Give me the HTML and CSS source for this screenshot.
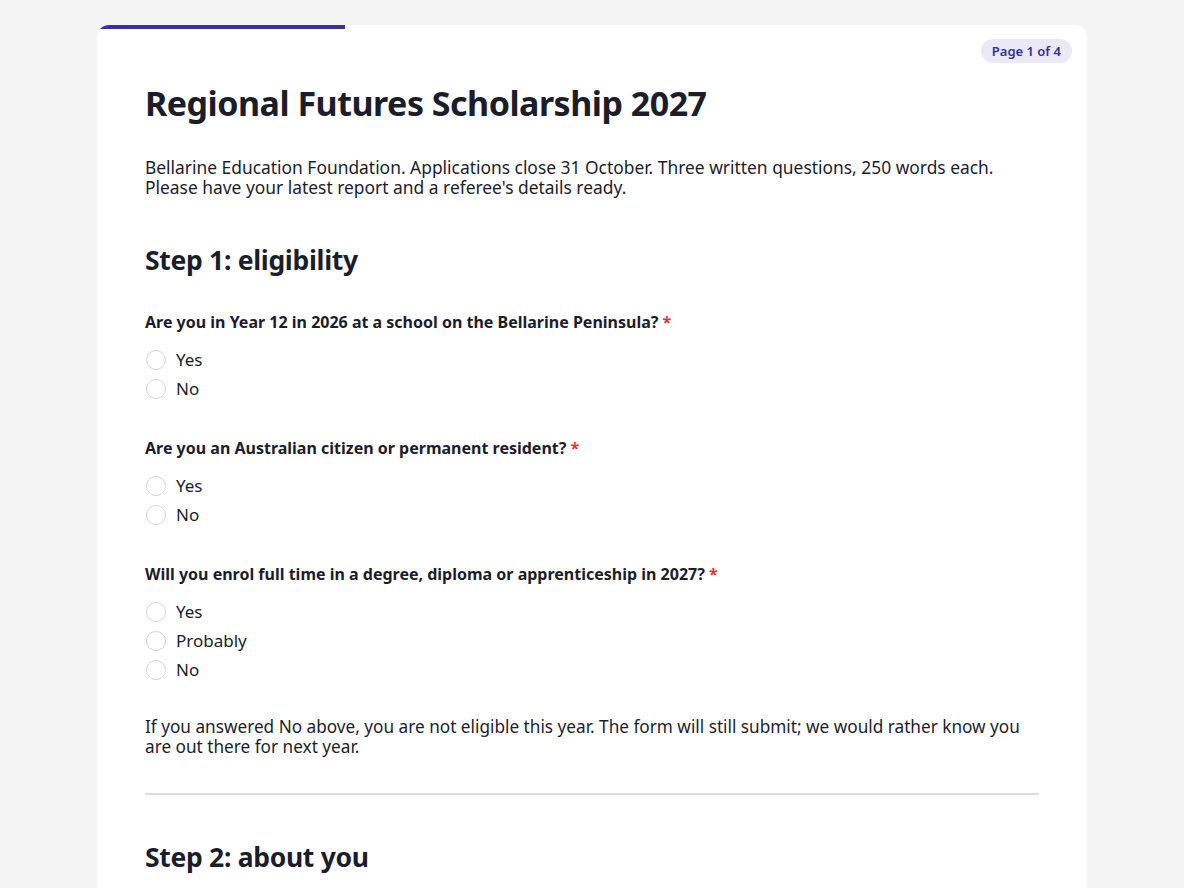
FILE: index.html
```html
<!DOCTYPE html>
<html lang="en">
<head>
  <meta charset="UTF-8">
  <meta name="viewport" content="width=device-width, initial-scale=1.0">
  <title>Regional Futures Scholarship 2027</title>
  <link rel="stylesheet" href="styles.css">
</head>
<body>

  <!-- form card -->
  <main class="form-card">
    <div class="progress"><div class="progress-fill"></div></div>
    <span class="page-badge">Page 1 of 4</span>

    <h1>Regional Futures Scholarship 2027</h1>
    <p class="intro">
      Bellarine Education Foundation. Applications close 31 October. Three written questions, 250 words each.
      Please have your latest report and a referee's details ready.
    </p>

    <!-- step 1 -->
    <section class="step">
      <h2>Step 1: eligibility</h2>

      <fieldset class="question">
        <legend>Are you in Year 12 in 2026 at a school on the Bellarine Peninsula? <span class="req">*</span></legend>
        <label class="option"><input type="radio" name="q1"> Yes</label>
        <label class="option"><input type="radio" name="q1"> No</label>
      </fieldset>

      <fieldset class="question">
        <legend>Are you an Australian citizen or permanent resident? <span class="req">*</span></legend>
        <label class="option"><input type="radio" name="q2"> Yes</label>
        <label class="option"><input type="radio" name="q2"> No</label>
      </fieldset>

      <fieldset class="question">
        <legend>Will you enrol full time in a degree, diploma or apprenticeship in 2027? <span class="req">*</span></legend>
        <label class="option"><input type="radio" name="q3"> Yes</label>
        <label class="option"><input type="radio" name="q3"> Probably</label>
        <label class="option"><input type="radio" name="q3"> No</label>
      </fieldset>

      <p class="note">
        If you answered No above, you are not eligible this year. The form will still submit; we would rather know you
        are out there for next year.
      </p>
    </section>

    <hr class="divider">

    <!-- step 2 -->
    <section class="step">
      <h2>Step 2: about you</h2>
    </section>
  </main>

</body>
</html>
```

FILE: styles.css
```css
/* === page === */
body {
  margin: 0;
  background: #f4f4f5;
  font-family: "Noto Sans", "Liberation Sans", sans-serif;
  color: #1c1d2b;
}

.form-card {
  position: relative;
  width: 990px;
  margin: 25px 0 0 97px;
  padding: 56px 48px 40px;
  box-sizing: border-box;
  background: #fff;
  border-radius: 12px;
  overflow: hidden;
}

.progress {
  position: absolute;
  top: 0;
  left: 0;
  right: 0;
  height: 4px;
}
.progress-fill {
  width: 25%;
  height: 100%;
  background: #3b30a3;
}

.page-badge {
  position: absolute;
  top: 14px;
  right: 15px;
  height: 24px;
  padding: 0 11px;
  box-sizing: border-box;
  border-radius: 12px;
  background: #ebe9f6;
  color: #3a2f93;
  font-size: 13px;
  font-weight: 600;
  line-height: 24px;
}

h1 {
  margin: 0;
  font-size: 34px;
  font-weight: 700;
  line-height: 44px;
  letter-spacing: -0.5px;
}

.intro {
  margin: 32px 0 0;
  font-size: 17.4px;
  line-height: 20px;
}

/* === steps === */
.step h2 {
  margin: 46px 0 0;
  font-size: 26.5px;
  font-weight: 700;
  line-height: 34px;
  letter-spacing: -0.3px;
}

.question {
  margin: 34px 0 0;
  padding: 0;
  border: none;
}
.question + .question {
  margin-top: 34px;
}
.question legend {
  padding: 0;
  font-size: 16px;
  font-weight: 700;
  line-height: 22px;
}
.req {
  color: #d93636;
}

.option {
  display: flex;
  align-items: center;
  gap: 10px;
  height: 29px;
  font-size: 17px;
}
.question legend + .option {
  margin-top: 12px;
}
.option input {
  appearance: none;
  width: 20px;
  height: 20px;
  margin: 0 0 0 1px;
  border: 1px solid #d3d3da;
  border-radius: 50%;
  background: #fff;
}

.note {
  margin: 33px 0 0;
  font-size: 17.2px;
  line-height: 20px;
}

.divider {
  margin: 36px 0 0;
  border: none;
  border-top: 2px solid #dcdce3;
}

.divider + .step h2 {
  margin-top: 45px;
}
```
